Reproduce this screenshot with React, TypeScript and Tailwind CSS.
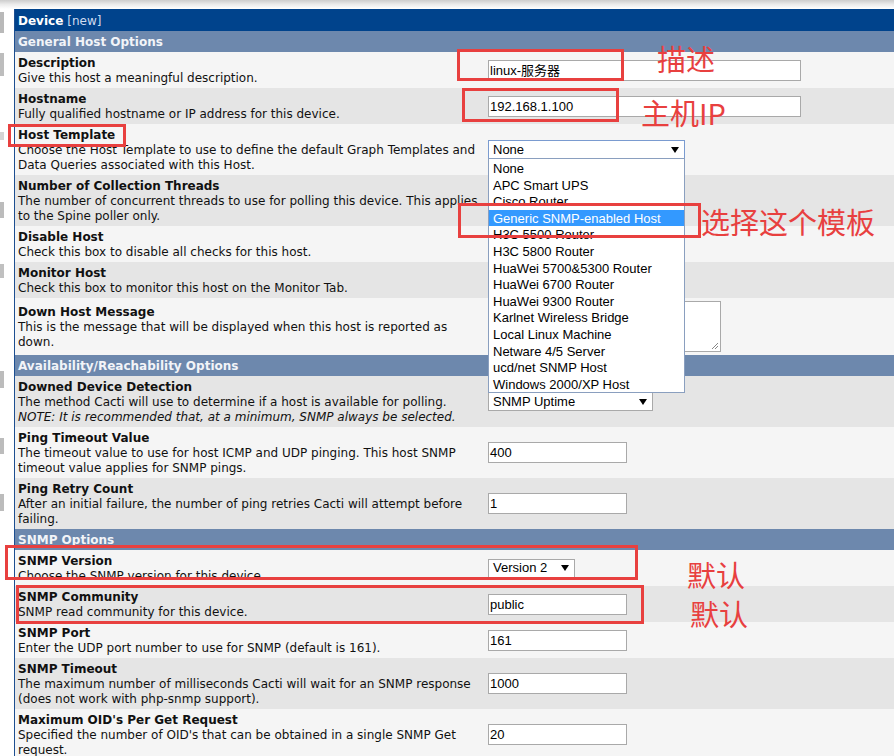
import React from "react";

type Row = {
  title: string;
  lines: React.ReactNode[];
  control?: React.ReactNode;
  alt: boolean;
};

const inputFont = "font-['Liberation_Sans','Noto_Sans_CJK_SC',sans-serif]";

function TextBox({ value, wide }: { value: string; wide?: boolean }) {
  return (
    <div
      className={`${wide ? "w-[313px]" : "w-[139px]"} h-[21px] border border-[#a9a9a9] bg-white pl-[1px] text-[13px] leading-[19px] text-black whitespace-nowrap overflow-hidden ${inputFont}`}
    >
      {value}
    </div>
  );
}

function Arrow() {
  return (
    <svg width="8" height="6" viewBox="0 0 8 6" className="shrink-0">
      <path d="M0 0h8L4 6z" fill="#000" />
    </svg>
  );
}

function SelectBox({ value, width, focus }: { value: string; width: string; focus?: boolean }) {
  return (
    <div
      className={`${width} h-[19px] border ${focus ? "border-[#7a9bd0]" : "border-[#a9a9a9]"} bg-white flex items-center justify-between pl-[4px] pr-[5px] text-[13px] text-black whitespace-nowrap ${inputFont}`}
    >
      <span>{value}</span>
      <Arrow />
    </div>
  );
}

const templates = [
  "None",
  "APC Smart UPS",
  "Cisco Router",
  "Generic SNMP-enabled Host",
  "H3C 5500 Router",
  "H3C 5800 Router",
  "HuaWei 5700&5300 Router",
  "HuaWei 6700 Router",
  "HuaWei 9300 Router",
  "Karlnet Wireless Bridge",
  "Local Linux Machine",
  "Netware 4/5 Server",
  "ucd/net SNMP Host",
  "Windows 2000/XP Host",
];

function TemplateSelect() {
  return (
    <div className="relative">
      <SelectBox value="None" width="w-[197px]" focus />
      {/* open dropdown list */}
      <div className={`absolute left-0 top-[18px] z-10 w-[197px] border border-[#8a9fbf] bg-white pt-[1px] text-[13px] text-black ${inputFont}`}>
        {templates.map((t, i) => (
          <div
            key={t}
            className={`h-[16.6px] leading-[17px] pl-[4px] whitespace-nowrap ${i === 3 ? "bg-[#3399ff] text-white" : ""}`}
          >
            {t}
          </div>
        ))}
      </div>
    </div>
  );
}

function TextArea() {
  return (
    <div className="relative w-[233px] h-[51px] border border-[#a9a9a9] bg-white">
      <svg width="8" height="8" viewBox="0 0 8 8" className="absolute right-[1px] bottom-[1px]">
        <path d="M7 1L1 7M7 4L4 7" stroke="#888" strokeWidth="1" />
      </svg>
    </div>
  );
}

const sections: { name: string; rows: Row[] }[] = [
  {
    name: "General Host Options",
    rows: [
      { title: "Description", lines: ["Give this host a meaningful description."], control: <TextBox value="linux-服务器" wide />, alt: false },
      { title: "Hostname", lines: ["Fully qualified hostname or IP address for this device."], control: <TextBox value="192.168.1.100" wide />, alt: true },
      {
        title: "Host Template",
        lines: ["Choose the Host Template to use to define the default Graph Templates and", "Data Queries associated with this Host."],
        control: <TemplateSelect />,
        alt: false,
      },
      {
        title: "Number of Collection Threads",
        lines: ["The number of concurrent threads to use for polling this device. This applies", "to the Spine poller only."],
        alt: true,
      },
      { title: "Disable Host", lines: ["Check this box to disable all checks for this host."], alt: false },
      { title: "Monitor Host", lines: ["Check this box to monitor this host on the Monitor Tab."], alt: true },
      {
        title: "Down Host Message",
        lines: ["This is the message that will be displayed when this host is reported as", "down."],
        control: <TextArea />,
        alt: false,
      },
    ],
  },
  {
    name: "Availability/Reachability Options",
    rows: [
      {
        title: "Downed Device Detection",
        lines: [
          "The method Cacti will use to determine if a host is available for polling.",
          <i key="n">NOTE: It is recommended that, at a minimum, SNMP always be selected.</i>,
        ],
        control: <SelectBox value="SNMP Uptime" width="w-[165px]" />,
        alt: true,
      },
      {
        title: "Ping Timeout Value",
        lines: ["The timeout value to use for host ICMP and UDP pinging. This host SNMP", "timeout value applies for SNMP pings."],
        control: <TextBox value="400" />,
        alt: false,
      },
      {
        title: "Ping Retry Count",
        lines: ["After an initial failure, the number of ping retries Cacti will attempt before", "failing."],
        control: <TextBox value="1" />,
        alt: true,
      },
    ],
  },
  {
    name: "SNMP Options",
    rows: [
      { title: "SNMP Version", lines: ["Choose the SNMP version for this device."], control: <SelectBox value="Version 2" width="w-[87px]" />, alt: false },
      { title: "SNMP Community", lines: ["SNMP read community for this device."], control: <TextBox value="public" />, alt: true },
      { title: "SNMP Port", lines: ["Enter the UDP port number to use for SNMP (default is 161)."], control: <TextBox value="161" />, alt: false },
      {
        title: "SNMP Timeout",
        lines: ["The maximum number of milliseconds Cacti will wait for an SNMP response", "(does not work with php-snmp support)."],
        control: <TextBox value="1000" />,
        alt: true,
      },
      {
        title: "Maximum OID's Per Get Request",
        lines: ["Specified the number of OID's that can be obtained in a single SNMP Get", "request."],
        control: <TextBox value="20" />,
        alt: false,
      },
    ],
  },
];

function FormRow({ row }: { row: Row }) {
  return (
    <div className={`flex ${row.alt ? "bg-[#e5e5e5]" : "bg-[#f5f5f5]"}`}>
      <div className="w-[469px] shrink-0 pl-[3px] pt-[4px] pb-[2px] flex flex-col justify-center whitespace-nowrap text-[12px] leading-[15px] text-[#111]">
        <div className="font-bold">{row.title}</div>
        {row.lines.map((l, i) => (
          <div key={i}>{l}</div>
        ))}
      </div>
      <div className="flex-1 pl-[4px] py-[3px] flex items-center">{row.control}</div>
    </div>
  );
}

// stray bits of the side menu peeking in at the left edge
function SideStrip() {
  return (
    <div className="w-[14px] shrink-0 flex flex-col bg-white">
      <div className="h-[3px]" />
      <div className="w-[4px] h-[21px] bg-[#b9b9b9]" />
      <div className="h-[20px]" />
      <div className="w-[4px] h-[23px] bg-[#bdbdbd]" />
      <div className="h-[56px]" />
      <div className="w-[4px] h-[8px] bg-[#d4d4d4]" />
      <div className="h-[62px]" />
      <div className="w-[4px] h-[16px] bg-[#bcbcbc]" />
      <div className="h-[46px]" />
      <div className="w-[4px] h-[14px] bg-[#c0c0c0]" />
      <div className="h-[93px]" />
      <div className="w-[4px] h-[17px] bg-[#bcbcbc]" />
      <div className="h-[50px]" />
      <div className="w-[4px] h-[16px] bg-[#bcbcbc]" />
      <div className="h-[40px]" />
      <div className="w-[4px] h-[17px] bg-[#bcbcbc]" />
    </div>
  );
}

const redBox = "absolute z-20 border-[3px] border-[#e8403f] pointer-events-none";
const redText = "absolute z-20 text-[29px] leading-none text-[#e8403f] whitespace-nowrap font-['Noto_Sans_CJK_SC',sans-serif]";

export default function App() {
  return (
    <div className="relative w-[894px] h-[756px] overflow-hidden bg-white font-['DejaVu_Sans',sans-serif]">
      <div className="h-[9px] bg-gradient-to-b from-[#cdcdcd] via-[#ececec] to-white" />
      <div className="flex">
        <SideStrip />
        <div className="flex-1 border-l border-[#1d4f91]">
          <div className="h-[22px] bg-[#00438c] flex items-center pl-[3px] pt-[1px] text-[12px] text-white whitespace-nowrap">
            <span className="font-bold">Device</span>
            <span className="ml-[4px] text-[#cfdcef]">[new]</span>
          </div>
          {sections.map((s) => (
            <div key={s.name}>
              <div className="h-[21px] bg-[#6d88ad] flex items-center pl-[3px] pt-[1px] text-[12px] font-bold text-[#f2f4f8]">
                {s.name}
              </div>
              {s.rows.map((r) => (
                <FormRow key={r.title} row={r} />
              ))}
            </div>
          ))}
        </div>
      </div>

      {/* annotations */}
      <div className={`${redBox} left-[457px] top-[49px] w-[167px] h-[32px]`} />
      <div className={`${redBox} left-[462px] top-[88px] w-[157px] h-[34px]`} />
      <div className={`${redBox} left-[8px] top-[124px] w-[118px] h-[23px]`} />
      <div className={`${redBox} left-[458px] top-[203px] w-[243px] h-[35px]`} />
      <div className={`${redBox} left-[5px] top-[545px] w-[633px] h-[35px]`} />
      <div className={`${redBox} left-[16px] top-[585px] w-[628px] h-[39px]`} />

      <div className={`${redText} left-[657px] top-[44px]`}>描述</div>
      <div className={`${redText} left-[641px] top-[98px]`}>主机IP</div>
      <div className={`${redText} left-[701px] top-[207px]`}>选择这个模板</div>
      <div className={`${redText} left-[687px] top-[560px]`}>默认</div>
      <div className={`${redText} left-[690px] top-[599px]`}>默认</div>
    </div>
  );
}
